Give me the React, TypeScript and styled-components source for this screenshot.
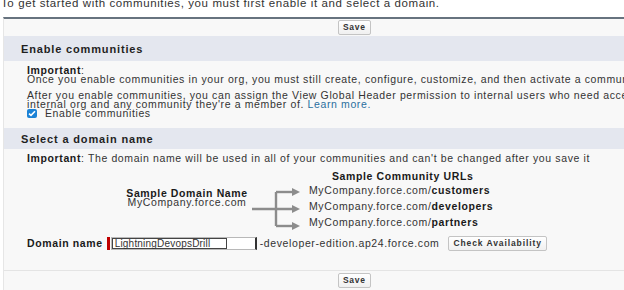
import styled, { createGlobalStyle } from 'styled-components'

const GlobalStyle = createGlobalStyle`
  body {
    margin: 0;
    background: #ffffff;
    font-family: 'Liberation Sans', Arial, sans-serif;
    color: #2b2b2b;
    overflow: hidden;
  }
`

const Page = styled.div`
  width: 624px;
  height: 290px;
  overflow: hidden;
`

const Intro = styled.p`
  margin: -2px 0 0 0;
  padding-left: 1px;
  height: 19px;
  font-size: 11.5px;
  line-height: 10px;
  letter-spacing: 0.6px;
  color: #333;
  white-space: nowrap;
`

const Panel = styled.div`
  margin-left: 3px;
  width: 700px;
  border-top: 2px solid #67737f;
  border-left: 1px solid #e6e6e6;
  background: #f8f8f8;
`

const ButtonRow = styled.div<{ $bottom?: boolean }>`
  display: flex;
  padding-left: 334px;
  height: ${(p) => (p.$bottom ? '19px' : '17px')};
  align-items: center;
  border-top: ${(p) => (p.$bottom ? '1px solid #e4e4e4' : 'none')};
`

const Button = styled.button<{ $wide?: boolean }>`
  font-family: 'Liberation Sans', Arial, sans-serif;
  font-size: 8.5px;
  font-weight: bold;
  letter-spacing: ${(p) => (p.$wide ? '0.9px' : '0.7px')};
  color: #333;
  background: linear-gradient(#ffffff, #f0f0f0);
  border: 1px solid #c4c4c4;
  border-radius: 2px;
  padding: 0 4px;
  height: 15px;
  line-height: 13px;
`

const SectionHeader = styled.h3<{ $h: number }>`
  margin: 0;
  height: ${(p) => p.$h}px;
  display: flex;
  align-items: center;
  padding-left: 17px;
  background: #e4e7ef;
  font-size: 11px;
  font-weight: bold;
  letter-spacing: 0.85px;
  color: #1f1f1f;
`

const Body = styled.div<{ $pad: string }>`
  padding: ${(p) => p.$pad};
  font-size: 10.5px;
  letter-spacing: 0.62px;
  line-height: 9px;
  color: #333;
  white-space: nowrap;
`

const Para = styled.p<{ $mt?: number }>`
  margin: ${(p) => p.$mt ?? 0}px 0 0 0;
`

const Strong = styled.b`
  color: #1a1a1a;
`

const Link = styled.a`
  color: #2a6f9e;
  text-decoration: none;
`

const CheckRow = styled.label`
  display: flex;
  align-items: center;
  gap: 8px;
  height: 9px;
`

const CheckBox = styled.span`
  width: 10px;
  height: 9px;
  border-radius: 2px;
  background: #1b82d6;
  display: flex;
  align-items: center;
  justify-content: center;
`

const DomainDiagram = styled.div`
  display: flex;
  align-items: flex-start;
  margin-top: 9px;
`

const SampleName = styled.div`
  width: 124px;
  margin-left: 98px;
  padding-top: 17px;
  text-align: center;
`

const Arrows = styled.svg`
  margin-top: 16px;
  margin-left: 3px;
  flex: none;
`

const UrlColumn = styled.div`
  margin-left: 7px;
  display: flex;
  flex-direction: column;
`

const UrlTitle = styled.div`
  font-weight: bold;
  color: #1a1a1a;
  padding-left: 23px;
  height: 14px;
`

const Url = styled.div`
  height: 16px;
`

const DomainRow = styled.div`
  display: flex;
  align-items: center;
  height: 15px;
  margin-top: 2px;
`

const Label = styled.span`
  font-weight: bold;
  color: #1a1a1a;
  margin-right: 4px;
`

const Required = styled.span`
  width: 3px;
  height: 13px;
  background: #c00000;
  margin-right: 1px;
`

const InputBox = styled.div`
  width: 146px;
  height: 13px;
  border: 1px solid #b8b8b8;
  border-right: 2px solid #333;
  background: #fff;
  box-sizing: border-box;
  display: flex;
  align-items: stretch;
`

const InputValue = styled.span`
  border: 1px solid #444;
  width: 115px;
  box-sizing: border-box;
  padding-left: 2px;
  display: flex;
  align-items: center;
  font-size: 10px;
  letter-spacing: 0.2px;
  color: #333;
`

const Suffix = styled.span`
  margin-left: 3px;
  margin-right: 9px;
`

export default function App() {
  return (
    <Page>
      <GlobalStyle />
      <Intro>To get started with communities, you must first enable it and select a domain.</Intro>
      <Panel>
        <ButtonRow>
          <Button>Save</Button>
        </ButtonRow>
        <SectionHeader $h={25}>Enable communities</SectionHeader>
        <Body $pad="5px 0 10px 23px">
          <Para><Strong>Important</Strong>:</Para>
          <Para>
            Once you enable communities in your org, you must still create, configure, customize, and then activate a community.
          </Para>
          <Para $mt={7}>
            After you enable communities, you can assign the View Global Header permission to internal users who need access to the
          </Para>
          <Para>
            internal org and any community they're a member of. <Link href="#">Learn more.</Link>
          </Para>
          <CheckRow>
            <CheckBox>
              <svg width="8" height="7" viewBox="0 0 8 7">
                <path d="M1 3.6 L3 5.4 L7 1.2" fill="none" stroke="#fff" strokeWidth="1.6" />
              </svg>
            </CheckBox>
            Enable communities
          </CheckRow>
        </Body>
        <SectionHeader $h={21}>Select a domain name</SectionHeader>
        <Body $pad="5px 0 19px 23px">
          <Para>
            <Strong>Important</Strong>: The domain name will be used in all of your communities and can't be changed after you save it
          </Para>
          <DomainDiagram>
            <SampleName>
              <Strong>Sample Domain Name</Strong>
              <br />
              MyCompany.force.com
            </SampleName>
            <Arrows width="50" height="42" viewBox="0 0 50 42">
              <g fill="none" stroke="#8c8c8c" strokeWidth="2.4">
                <path d="M0 21 H44" />
                <path d="M24 4 V38" />
                <path d="M24 4 H42" />
                <path d="M24 38 H42" />
              </g>
              <g fill="#8c8c8c">
                <path d="M40 0 L48 4 L40 8 Z" />
                <path d="M40 17 L48 21 L40 25 Z" />
                <path d="M40 34 L48 38 L40 42 Z" />
              </g>
            </Arrows>
            <UrlColumn>
              <UrlTitle>Sample Community URLs</UrlTitle>
              <Url>MyCompany.force.com/<Strong>customers</Strong></Url>
              <Url>MyCompany.force.com/<Strong>developers</Strong></Url>
              <Url>MyCompany.force.com/<Strong>partners</Strong></Url>
            </UrlColumn>
          </DomainDiagram>
          <DomainRow>
            <Label>Domain name</Label>
            <Required />
            <InputBox>
              <InputValue>LightningDevopsDrill</InputValue>
            </InputBox>
            <Suffix>-developer-edition.ap24.force.com</Suffix>
            <Button $wide>Check Availability</Button>
          </DomainRow>
        </Body>
        <ButtonRow $bottom>
          <Button>Save</Button>
        </ButtonRow>
      </Panel>
    </Page>
  )
}
